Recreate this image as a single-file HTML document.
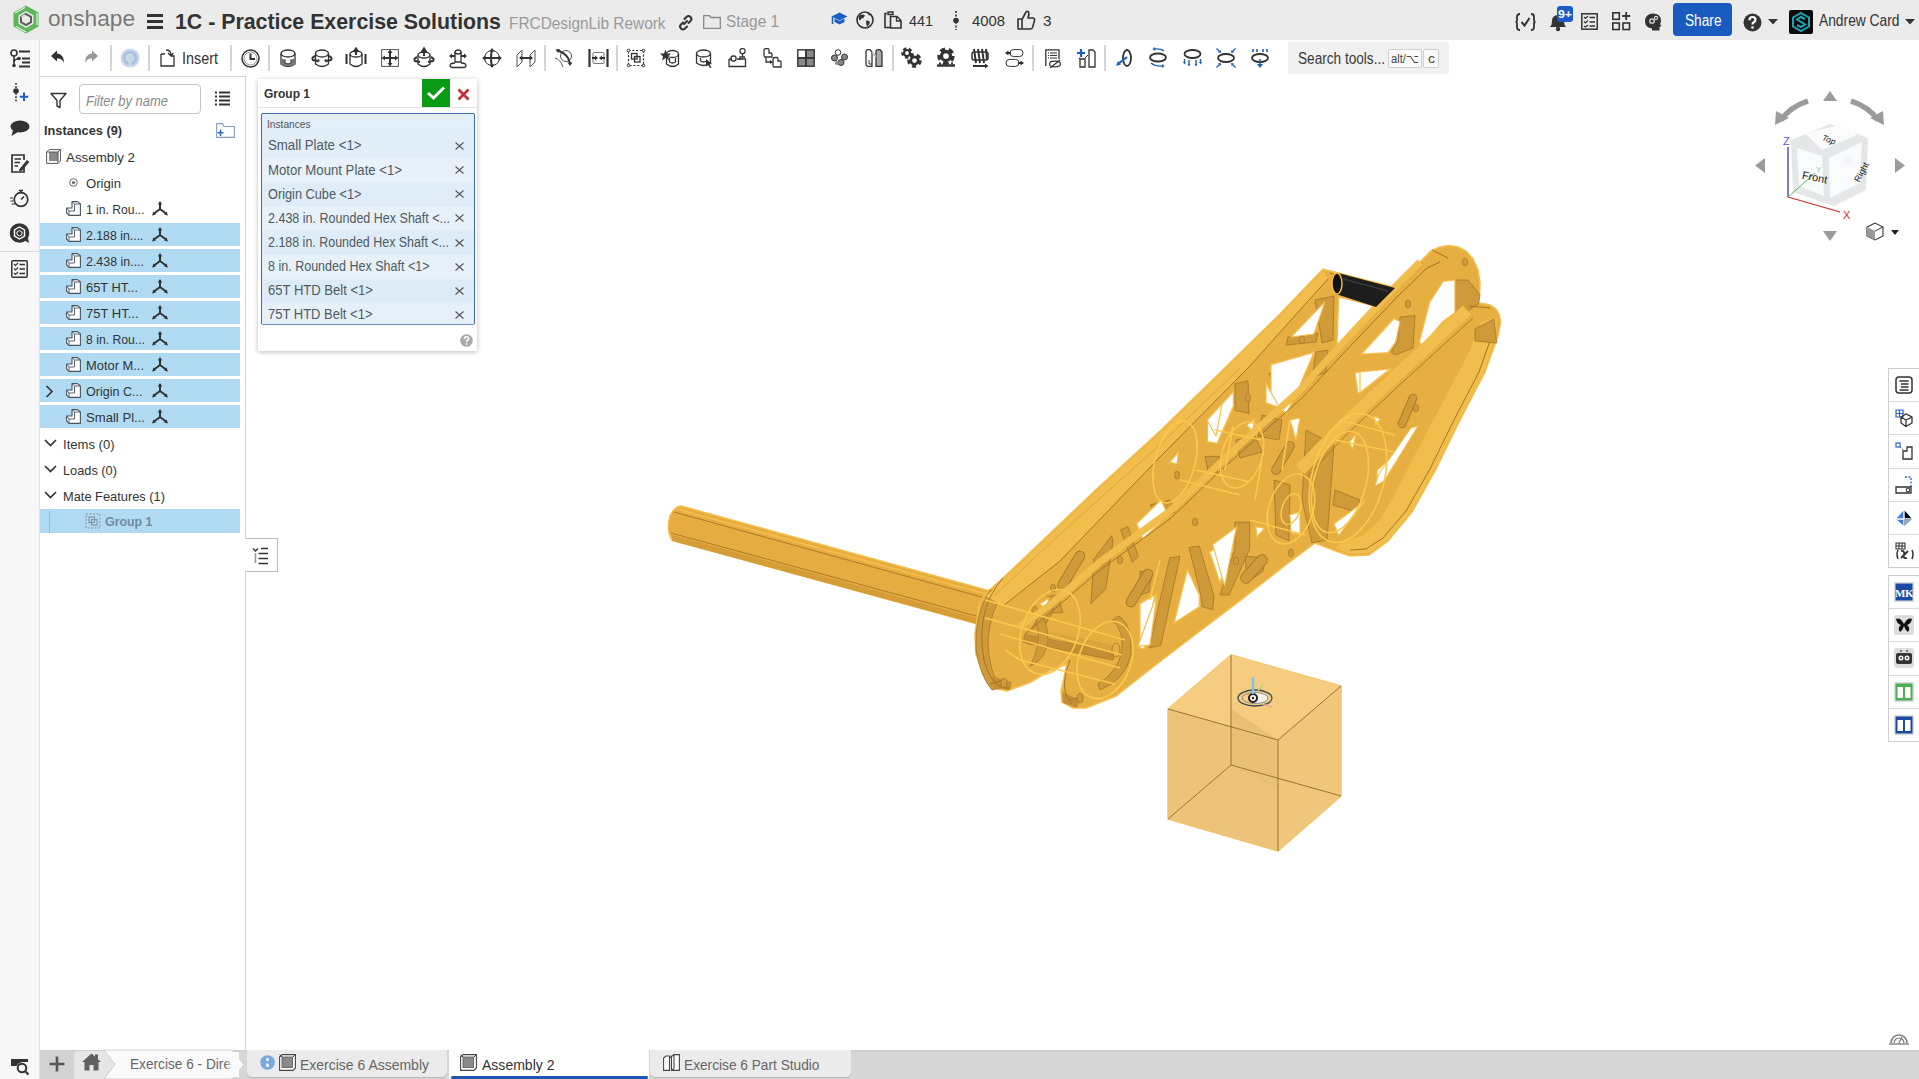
<!DOCTYPE html>
<html><head><meta charset="utf-8">
<style>
*{box-sizing:border-box;margin:0;padding:0}
html,body{width:1919px;height:1079px;overflow:hidden;background:#fff;font-family:"Liberation Sans",sans-serif;color:#333;position:relative}
.a{position:absolute}
.t{position:absolute;white-space:nowrap;line-height:1}
svg{position:absolute;overflow:visible}
</style></head><body>
<div class="a" style="left:0px;top:0px;width:1919px;height:40px;background:#ebebeb"></div>
<div class="a" style="left:0px;top:40px;width:40px;height:1039px;background:#f7f7f7;border-right:1px solid #e2e2e2"></div>
<svg style="left:0;top:0" width="1919" height="1079" viewBox="0 0 1919 1079"><path d="M681,506 L990,591 L978,624 L672,540 Q666,530 670,516 Q674,507 681,506 Z" fill="#e6ac40" stroke="#f6bd48" stroke-width="1.5"/>
<path d="M674,512 L985,598" stroke="#a57526" stroke-width="0.9" fill="none"/><path d="M677,509 L986,594" stroke="#f3bb4a" stroke-width="2" fill="none"/>
<path d="M671,533 L980,617" stroke="#a57526" stroke-width="0.9" fill="none"/>
<path d="M672,535 L980,619 L977,624 L672,541Z" fill="#d49d37"/>
<polygon points="985,594 1003,578 1100,486 1160,431 1233,360 1280,314 1323,269 1338,273 1393,287 1404,280 1420,262 1431,251 1440,247 1449,245.5 1458,247 1466,251 1473,259 1478,270 1480,283 1479.5,295 1477,303 1483,303.5 1490,305 1496,309 1499.5,315 1500.5,323 1498,336 1485,372 1460,420 1436,469 1412,512 1388,541 1369,555 1350,556 1333,550 1315,543 1283,567 1237,603 1200,631 1153,667 1116,696 1086,708 1073,708 1062,702 1061,691 1067,664 1049,671 1031,682 1007,691 994,688 990,679 976,655 975,634 979,605" fill="#e7af41" stroke="#f6be4a" stroke-width="1.5"/>
<polygon points="1315,300 1334,296 1333,340 1322,343 1318,318" fill="#cf9a3a" stroke="#a57526" stroke-width="0.8"/>
<polygon points="1288,337 1318,333 1316,342 1286,345" fill="#cf9a3a" stroke="#a57526" stroke-width="0.8"/>
<polygon points="1316,352 1328,350 1326,372 1312,378" fill="#cf9a3a" stroke="#a57526" stroke-width="0.8"/>
<polygon points="1235,383.7 1248,380.8 1249,413.4 1235,410.4" fill="#cf9a3a" stroke="#a57526" stroke-width="0.8"/>
<polygon points="1269,373.3 1277,373.3 1289,398.6 1280,401.5" fill="#cf9a3a" stroke="#a57526" stroke-width="0.8"/>
<polygon points="1205,456.4 1220,456.4 1217,472.7 1208,471.2" fill="#cf9a3a" stroke="#a57526" stroke-width="0.8"/>
<polygon points="1150,505 1170,500 1175,512 1160,520" fill="#cf9a3a" stroke="#a57526" stroke-width="0.8"/>
<polygon points="1400,317 1415,315.6 1413,348 1395,355 1391,352 1398,340" fill="#cf9a3a" stroke="#a57526" stroke-width="0.8"/>
<polygon points="1455,280 1468,280 1480,294.8 1478.6,303.7 1466,312 1455,315.6" fill="#cf9a3a" stroke="#a57526" stroke-width="0.8"/>
<polygon points="1306,430 1334,445 1327,540 1312,543 1302,500" fill="#cf9a3a" stroke="#a57526" stroke-width="0.8"/>
<polygon points="1274,480 1290,485 1289,541 1276,535" fill="#cf9a3a" stroke="#a57526" stroke-width="0.8"/>
<polygon points="1189,547.4 1199.3,546 1214,596.4 1212.7,609.7 1202.3,606.8 1200.8,594.9" fill="#cf9a3a" stroke="#a57526" stroke-width="0.8"/>
<polygon points="1234.9,522.2 1249.7,522.2 1249.7,549 1229,594.9 1220,594.9 1234.9,549" fill="#cf9a3a" stroke="#a57526" stroke-width="0.8"/>
<polygon points="1245.3,556.3 1266,557.8 1263,571.2 1246.8,583" fill="#cf9a3a" stroke="#a57526" stroke-width="0.8"/>
<polygon points="1149,648 1160.8,645.3 1180,556.3 1169.7,557.8" fill="#cf9a3a" stroke="#a57526" stroke-width="0.8"/>
<polygon points="1140,571 1152,574 1149,592 1140,595" fill="#cf9a3a" stroke="#a57526" stroke-width="0.8"/>
<polygon points="1093.8,559.3 1111.6,535.6 1113,541.5 1105.7,589 1090.8,603.8" fill="#cf9a3a" stroke="#a57526" stroke-width="0.8"/>
<polygon points="1120.5,529.7 1128,526.7 1138.3,556.3 1132.3,562.3" fill="#cf9a3a" stroke="#a57526" stroke-width="0.8"/>
<polygon points="1047.8,596.4 1058.2,595 1062.7,612.7 1052.3,612.7" fill="#cf9a3a" stroke="#a57526" stroke-width="0.8"/>
<polygon points="1236,440 1255,436 1262,452 1240,458" fill="#cf9a3a" stroke="#a57526" stroke-width="0.8"/>
<polygon points="1262,415 1282,420 1279,440 1258,436" fill="#cf9a3a" stroke="#a57526" stroke-width="0.8"/>
<polygon points="1335,490 1360,500 1356,512 1333,505" fill="#cf9a3a" stroke="#a57526" stroke-width="0.8"/>
<path d="M1062.5,585 L1080,556" stroke="#a57526" stroke-width="10.6" stroke-linecap="round"/><path d="M1062.5,585 L1080,556" stroke="#cf9a3a" stroke-width="9.0" stroke-linecap="round"/>
<path d="M1031,640 L1048,610" stroke="#a57526" stroke-width="10.6" stroke-linecap="round"/><path d="M1031,640 L1048,610" stroke="#cf9a3a" stroke-width="9.0" stroke-linecap="round"/>
<path d="M1131,602 L1148,574" stroke="#a57526" stroke-width="10.6" stroke-linecap="round"/><path d="M1131,602 L1148,574" stroke="#cf9a3a" stroke-width="9.0" stroke-linecap="round"/>
<path d="M1276,470 L1290,446" stroke="#a57526" stroke-width="9.6" stroke-linecap="round"/><path d="M1276,470 L1290,446" stroke="#cf9a3a" stroke-width="8" stroke-linecap="round"/>
<path d="M1402,424 L1413,398" stroke="#a57526" stroke-width="8.6" stroke-linecap="round"/><path d="M1402,424 L1413,398" stroke="#cf9a3a" stroke-width="7.0" stroke-linecap="round"/>
<path d="M1246,578 L1262,560" stroke="#a57526" stroke-width="11.6" stroke-linecap="round"/><path d="M1246,578 L1262,560" stroke="#cf9a3a" stroke-width="10" stroke-linecap="round"/>
<path d="M990,590 Q974,615 976,650 Q980,676 992,690 L1000,688 Q988,668 988,640 Q990,612 1003,593Z" fill="#cf9a3a" stroke="#a57526" stroke-width="0.8"/>
<path d="M992,676 L1012,682 L1010,690 L994,688Z" fill="#c48f34"/>
<path d="M1119,616 Q1133,625 1131,655 Q1125,680 1100,690 L1098,684 Q1118,672 1122,650 Q1124,630 1112,620Z" fill="#cf9a3a" stroke="#a57526" stroke-width="0.8"/>
<path d="M1062,692 L1080,700 L1077,708 L1063,703Z" fill="#c48f34"/>
<path d="M1025,634 L1115,652 L1113,660 L1023,642Z" fill="#c48f34" stroke="#a57526" stroke-width="0.7"/>
<path d="M1028,628 L1116,645 L1115,652 L1025,634Z" fill="#dba53e"/>
<ellipse cx="1116" cy="650" rx="4" ry="7" fill="#e7af41" stroke="#a57526" stroke-width="0.8"/>
<path d="M1035,606 Q1048,618 1048,640 Q1046,660 1030,666 Q1040,648 1038,628 Q1036,614 1030,608Z" fill="#cf9a3a" stroke="#a57526" stroke-width="0.7"/>
<polygon points="1291,337 1324.8,301.9 1314,334" fill="#fff" stroke="#f6c050" stroke-width="1.2"/>
<polygon points="1338.6,297 1374,306 1393,288 1337,346" fill="#fff" stroke="#f6c050" stroke-width="1.2"/>
<polygon points="1271,364.6 1314,352.3 1300,385 1286.5,413.5 1271,401" fill="#fff" stroke="#f6c050" stroke-width="1.2"/>
<polygon points="1361.5,354 1394,318.5 1400,321.5 1395.6,342.3 1388,352.7" fill="#fff" stroke="#f6c050" stroke-width="1.2"/>
<polygon points="1355,372.7 1390.5,370 1358,393.5" fill="#fff" stroke="#f6c050" stroke-width="1.2"/>
<polygon points="1419.3,342.3 1429.7,302.2 1443,281.5 1455,280 1455,312.6 1443,321.5 1422.3,345.2" fill="#fff" stroke="#f6c050" stroke-width="1.2"/>
<polygon points="1360,372 1389.7,369 1360,392.7" fill="#fff" stroke="#f6c050" stroke-width="1.2"/>
<polygon points="1207.5,420 1233.4,391.5 1233.4,406 1217,443.4 1207.5,441.6" fill="#fff" stroke="#f6c050" stroke-width="1.2"/>
<polygon points="1266,383.7 1279.4,407.4 1266,403" fill="#fff" stroke="#f6c050" stroke-width="1.2"/>
<polygon points="1246.8,425.2 1254.2,419.3 1252.7,431.2" fill="#fff" stroke="#f6c050" stroke-width="1.2"/>
<polygon points="1169.7,462.3 1178.5,452 1177,463.8" fill="#fff" stroke="#f6c050" stroke-width="1.2"/>
<polygon points="1136.7,523.6 1161,500 1168,515 1142.8,538.9" fill="#fff" stroke="#f6c050" stroke-width="1.2"/>
<polygon points="1174.1,623 1187.4,569.7 1199.3,594.9 1199.3,606.8" fill="#fff" stroke="#f6c050" stroke-width="1.2"/>
<polygon points="1209.7,551.9 1234.9,534.1 1220,583" fill="#fff" stroke="#f6c050" stroke-width="1.2"/>
<polygon points="1140,603.8 1154.8,594.9 1144.4,648.3 1140,648.3" fill="#fff" stroke="#f6c050" stroke-width="1.2"/>
<polygon points="1255.7,526.7 1264.6,528.2 1257.1,537" fill="#fff" stroke="#f6c050" stroke-width="1.2"/>
<polygon points="1289.8,514.8 1300,511.9 1300,534.1 1291.2,532.6" fill="#fff" stroke="#f6c050" stroke-width="1.2"/>
<polygon points="1334,523.8 1362.3,503 1365.2,500 1338.6,535.6" fill="#fff" stroke="#f6c050" stroke-width="1.2"/>
<polygon points="1377,470.4 1389,460 1397.9,460 1377,482.2" fill="#fff" stroke="#f6c050" stroke-width="1.2"/>
<polygon points="1349,442.7 1356,433.8 1353,448.6" fill="#fff" stroke="#f6c050" stroke-width="1.2"/>
<polygon points="1138,646 1157,594 1150,645" fill="#fff" stroke="#f6c050" stroke-width="1.2"/>
<polygon points="1040,604 1049,598 1046,609" fill="#fff" stroke="#f6c050" stroke-width="1.2"/>
<polygon points="1374,416 1380,419 1375.6,425" fill="#fff" stroke="#f6c050" stroke-width="1.2"/>
<polygon points="1212.7,544.6 1236.4,527 1224.6,586" fill="#fff" stroke="#f6c050" stroke-width="1.2"/>
<polygon points="1207,420 1222,404 1216,436" fill="#fff" stroke="#f6c050" stroke-width="1.2"/>
<polygon points="1290,420 1300,418 1296,440" fill="#fff" stroke="#f6c050" stroke-width="1.2"/>
<polygon points="986,596 1003,580 1100,488 1160,433 1233,362 1280,316 1323,271 1328,279 1282,330 1250,366 1159,458 1060,561 1003,606" fill="#f1bd4c"/>
<path d="M994,596 L1060,534 L1161,444 L1240,368" fill="none" stroke="#dca23c" stroke-width="1"/>
<path d="M1003,606 L1060,561 L1159,458 L1250,366 L1282,330 L1328,279" fill="none" stroke="#a57526" stroke-width="1"/>
<path d="M1330,273 L1338,276" stroke="#a57526" stroke-width="1"/>
<path d="M1019,627 L1050,605 L1100,562 L1170,511 L1220,463 L1300,390 L1337,349 L1393,289 L1420,262" fill="none" stroke="#f1bd4c" stroke-width="7"/>
<path d="M1025,634 L1050,613 L1100,570 L1170,519 L1220,471 L1302,398 L1340,357 L1397,297 L1427,268 L1440,262" fill="none" stroke="#a57526" stroke-width="1"/>
<path d="M1432,250 L1448,258" stroke="#a57526" stroke-width="1"/>
<polygon points="1497,318 1496,336 1484,372 1459,420 1435,469 1411,512 1387,541 1369,553 1350,554 1335,548 1345,540 1362,536 1380,520 1396,492 1418,449 1446,396 1470,350 1481,322" fill="#f1bd4c"/>
<path d="M1493,322 L1491,338 L1479,372 L1454,420 L1430,469 L1406,511 L1383,538 L1366,549 L1350,550" fill="none" stroke="#a57526" stroke-width="1"/>
<polygon points="1411,428 1418,426 1384,481 1375,486 1379,474" fill="#fff" stroke="#f6c050" stroke-width="1"/>
<polygon points="1475,329 1494,319 1496.6,343 1475,341" fill="#cf9a3a" stroke="#a57526" stroke-width="0.8"/>
<path d="M1467,310 L1400,372 L1340,428 L1300,470" fill="none" stroke="#f1bd4c" stroke-width="12"/>
<path d="M1473,318 L1405,380 L1345,436 L1306,478" fill="none" stroke="#a57526" stroke-width="0.9"/>
<path d="M1469,306 L1490,308" stroke="#a57526" stroke-width="1"/>
<path d="M1003,578 Q975,610 984,660 Q992,690 1010,688" fill="none" stroke="#a57526" stroke-width="1"/>
<path d="M1070,660 Q1058,690 1072,704" fill="none" stroke="#a57526" stroke-width="1"/>
<path d="M990,684 L1003,680 M1070,700 L1083,696" stroke="#a57526" stroke-width="1"/>
<ellipse cx="1004" cy="683" rx="3" ry="4.5" fill="#cf9a3a" stroke="#a57526" stroke-width="0.8"/>
<ellipse cx="1080" cy="698" rx="3" ry="4.5" fill="#cf9a3a" stroke="#a57526" stroke-width="0.8"/>
<ellipse cx="1177" cy="475" rx="2.6" ry="4" fill="#cf9a3a" stroke="#a57526" stroke-width="0.7"/>
<ellipse cx="1248" cy="398" rx="2.6" ry="4" fill="#cf9a3a" stroke="#a57526" stroke-width="0.7"/>
<ellipse cx="1302" cy="340" rx="2.6" ry="4" fill="#cf9a3a" stroke="#a57526" stroke-width="0.7"/>
<ellipse cx="1408" cy="304" rx="2.6" ry="4" fill="#cf9a3a" stroke="#a57526" stroke-width="0.7"/>
<ellipse cx="1465" cy="262" rx="2.6" ry="4" fill="#cf9a3a" stroke="#a57526" stroke-width="0.7"/>
<ellipse cx="1053" cy="588" rx="2.6" ry="4" fill="#cf9a3a" stroke="#a57526" stroke-width="0.7"/>
<ellipse cx="1120" cy="560" rx="2.6" ry="4" fill="#cf9a3a" stroke="#a57526" stroke-width="0.7"/>
<ellipse cx="1236" cy="561" rx="2.6" ry="4" fill="#cf9a3a" stroke="#a57526" stroke-width="0.7"/>
<ellipse cx="1291" cy="553" rx="2.6" ry="4" fill="#cf9a3a" stroke="#a57526" stroke-width="0.7"/>
<ellipse cx="1195" cy="522" rx="2.6" ry="4" fill="#cf9a3a" stroke="#a57526" stroke-width="0.7"/>
<ellipse cx="1416" cy="408" rx="2.6" ry="4" fill="#cf9a3a" stroke="#a57526" stroke-width="0.7"/>
<g fill="none" stroke="#fbc94e" stroke-width="1.6" opacity="1"><ellipse cx="1050" cy="632" rx="28" ry="44" transform="rotate(20 1050 632)"/><ellipse cx="1105" cy="660" rx="26" ry="40" transform="rotate(20 1105 660)"/><ellipse cx="1175" cy="462" rx="20" ry="42" transform="rotate(15 1175 462)"/><ellipse cx="1242" cy="455" rx="20" ry="34" transform="rotate(18 1242 455)"/><ellipse cx="1348" cy="478" rx="36" ry="66" transform="rotate(15 1348 478)"/><ellipse cx="1340" cy="482" rx="26" ry="52" transform="rotate(15 1340 482)"/><ellipse cx="1291" cy="509" rx="22" ry="36" transform="rotate(18 1291 509)"/><ellipse cx="1291" cy="509" rx="9" ry="16" transform="rotate(18 1291 509)"/><path d="M985,600 L1125,640 M985,618 L1122,655 M1000,634 L1120,668 M1005,650 L1020,660 L1115,684"/><path d="M1180,480 L1240,495 M1196,470 L1250,482 M1215,430 L1262,440 M1340,420 L1395,435 M1335,440 L1395,452 M1250,520 L1305,535"/><path d="M1233,426 L1225,470 M1262,460 L1255,500 M1290,420 L1282,470 M1160,560 L1150,600"/></g>
<path d="M1338,273 L1395,288 L1376,307 L1336,294 Z" fill="#1d1d1d"/>
<ellipse cx="1337" cy="283.5" rx="5" ry="10.5" fill="#111" stroke="#f6be4a" stroke-width="1.4"/>
<path d="M1343,279 L1388,291" stroke="#3a3a3a" stroke-width="1.5"/>
<polygon points="1231,655 1341,686 1341,796 1278,851 1168,819 1168,709" fill="#f0c57a" stroke="#f7c25a" stroke-width="1.5"/>
<polygon points="1168,709 1278,740 1341,686 1231,655" fill="#f6cd80"/>
<polygon points="1168,709 1278,740 1278,851 1168,819" fill="#edc379"/>
<polygon points="1278,740 1341,686 1341,796 1278,851" fill="#f0c67b"/>
<polygon points="1231,709 1278,740 1278,790 1231,765" fill="#e9bf74"/>
<g stroke="#9c7433" stroke-width="1" fill="none"><path d="M1231,655 V765 L1168,819 M1231,765 L1341,796 M1168,709 L1278,740 L1341,686 M1278,740 V851"/></g>
<ellipse cx="1255" cy="698" rx="17" ry="8" fill="none" stroke="#3c4a55" stroke-width="1.3"/>
<path d="M1255,692.5 A13,5.5 0 0 1 1255,703.5Z" fill="#f4f1ea"/><ellipse cx="1255" cy="698" rx="13" ry="5.5" fill="none" stroke="#7a8a95" stroke-width="0.9"/>
<circle cx="1253" cy="698" r="4" fill="#fff" stroke="#222" stroke-width="2"/><circle cx="1253" cy="698" r="1.2" fill="#222"/>
<path d="M1253,694 V677" stroke="#7cc4f0" stroke-width="2.5"/><path d="M1257,692 L1263,685" stroke="#9ad48a" stroke-width="1.2"/><path d="M1262,704 L1272,707" stroke="#e7a0b0" stroke-width="1.2"/></svg>
<svg style="left:12px;top:5px" width="28" height="29" viewBox="0 0 28 29">
<path d="M14,0.5 L26.5,7.5 L26.5,21.5 L14,28.5 L1.5,21.5 L1.5,7.5 Z" fill="#5cb85a"/>
<path d="M14,6 L21.5,10.2 L21.5,18.8 L14,23 L6.5,18.8 L6.5,10.2 Z" fill="#e9e9e9"/>
<path d="M3,8 L13,2.5 M25,8 L25,20 M14,27 L4,21.5" stroke="#ebebeb" stroke-width="1.2"/>
<path d="M14,9 L19,11.8 L19,17.2 L14,20 L9,17.2 L9,11.8 Z" fill="none" stroke="#5d5d5d" stroke-width="2"/>
<path d="M9.5,12 L13,10" stroke="#e9e9e9" stroke-width="1.5"/>
</svg>
<div class="t" style="left:47.5px;top:7.7px;font-size:22px;color:#787878;font-weight:normal;font-style:normal;transform:scaleX(1.0305);transform-origin:0 0;">onshape</div>
<div class="a" style="left:147px;top:14px;width:16px;height:3px;background:#333"></div>
<div class="a" style="left:147px;top:20px;width:16px;height:3px;background:#333"></div>
<div class="a" style="left:147px;top:26px;width:16px;height:3px;background:#333"></div>
<div class="t" style="left:175.0px;top:10.8px;font-size:22.5px;color:#333;font-weight:bold;font-style:normal;transform:scaleX(0.9479);transform-origin:0 0;">1C - Practice Exercise Solutions</div>
<div class="t" style="left:508.5px;top:15.7px;font-size:16px;color:#9a9a9a;font-weight:normal;font-style:normal;transform:scaleX(0.9618);transform-origin:0 0;">FRCDesignLib Rework</div>
<svg style="left:678px;top:15px" width="15" height="15" viewBox="0 0 15 15"><g fill="none" stroke="#333" stroke-width="2" stroke-linecap="round"><path d="M6,9 L9,6"/><path d="M5,7.5 L3,9.5 a2.8,2.8 0 0 0 4,4 L9,11.5"/><path d="M6.5,4 L8.5,2 a2.8,2.8 0 0 1 4,4 L10.5,8"/></g></svg>
<svg style="left:703px;top:15px" width="18" height="14" viewBox="0 0 18 14"><path d="M0.7,0.7 H6.5 L8,2.5 H17.3 V13.3 H0.7 Z" fill="none" stroke="#888" stroke-width="1.3"/></svg>
<div class="t" style="left:725.5px;top:14.2px;font-size:16px;color:#999;font-weight:normal;font-style:normal;transform:scaleX(0.9609);transform-origin:0 0;">Stage 1</div>
<svg style="left:831px;top:12px" width="17" height="15" viewBox="0 0 17 15"><path d="M8.5,0.5 L16.5,4.5 L8.5,8.5 L0.5,4.5Z" fill="#1b5ec4"/><path d="M3.5,6.5 V10 L8.5,12.5 L13.5,10 V6.5 L8.5,9Z" fill="#1b5ec4"/><path d="M1.5,5 V12" stroke="#1b5ec4" stroke-width="1.5"/></svg>
<svg style="left:856px;top:11px" width="19" height="18" viewBox="0 0 19 18"><circle cx="9" cy="9" r="8" fill="none" stroke="#333" stroke-width="1.6"/><path d="M4,4 Q7,3 9,4.5 Q8,7 5.5,7.5 Q4.5,10 3,9 Q2,6 4,4Z M10,9.5 Q13,9 14,11 Q13.5,14 11,15.5 Q10,13 10,9.5Z M11,2 Q13,2 15,4.5 Q12.5,5 11,2Z" fill="#333"/></svg>
<svg style="left:884px;top:11px" width="19" height="18" viewBox="0 0 19 18"><path d="M3,2.5 H1 V16.5 H6" fill="none" stroke="#333" stroke-width="1.6"/><path d="M4,1 H9 V3.5 H4Z" fill="none" stroke="#333" stroke-width="1.4"/><path d="M6.5,5.5 H13 L17,9.5 V17 H6.5Z" fill="none" stroke="#333" stroke-width="1.6"/><path d="M12.5,5.5 V10 H17" fill="none" stroke="#333" stroke-width="1.4"/></svg>
<div class="t" style="left:908.5px;top:13.4px;font-size:15.5px;color:#333;font-weight:normal;font-style:normal;transform:scaleX(0.9275);transform-origin:0 0;">441</div>
<svg style="left:953px;top:11px" width="6" height="19" viewBox="0 0 6 19"><path d="M3,0 V19" stroke="#333" stroke-width="1.6" stroke-dasharray="2,1.6"/><circle cx="3" cy="9.5" r="2.8" fill="#333"/></svg>
<div class="t" style="left:971.5px;top:13.4px;font-size:15.5px;color:#333;font-weight:normal;font-style:normal;transform:scaleX(0.9570);transform-origin:0 0;">4008</div>
<svg style="left:1017px;top:10px" width="19" height="20" viewBox="0 0 19 20"><path d="M1,9 H5 V19 H1Z M5,9.5 L9,2 Q10.5,0.5 11.5,2 Q12.5,4 11,8 H16 Q18,8.5 17.5,10.5 L15.5,17.5 Q15,19 13,19 H5" fill="none" stroke="#333" stroke-width="1.6" stroke-linejoin="round"/></svg>
<div class="t" style="left:1043.0px;top:13.4px;font-size:15.5px;color:#333;font-weight:normal;font-style:normal;transform:scaleX(0.9855);transform-origin:0 0;">3</div>
<svg style="left:1515px;top:13px" width="21" height="18" viewBox="0 0 21 18"><path d="M5,1 Q2,1 2,3.5 V7 Q2,9 0.5,9 Q2,9 2,11 V14.5 Q2,17 5,17 M16,1 Q19,1 19,3.5 V7 Q19,9 20.5,9 Q19,9 19,11 V14.5 Q19,17 16,17" fill="none" stroke="#333" stroke-width="1.8"/><path d="M6.5,9 L9.5,12.5 L14.5,5" fill="none" stroke="#333" stroke-width="2"/></svg>
<svg style="left:1548px;top:10px" width="20" height="22" viewBox="0 0 20 22"><path d="M2,17 Q4,15 4,11 Q4,5.5 10,5 Q16,5.5 16,11 Q16,15 18,17Z" fill="#333"/><circle cx="10" cy="19" r="2.2" fill="#333"/></svg>
<div class="a" style="left:1557px;top:6px;width:16px;height:15.5px;background:#1a5dc4;border-radius:3px"></div>
<div class="t" style="left:1558.0px;top:8.9px;font-size:11px;color:#fff;font-weight:bold;font-style:normal;transform:scaleX(1.1158);transform-origin:0 0;">9+</div>
<svg style="left:1581px;top:13px" width="17" height="17" viewBox="0 0 17 17"><rect x="0.8" y="0.8" width="15.4" height="15.4" fill="none" stroke="#333" stroke-width="1.5"/><path d="M3,4 L4.5,5.5 L7,3 M3,8.5 L4.5,10 L7,7.5 M3,13 L4.5,14 L7,12" fill="none" stroke="#333" stroke-width="1.1"/><path d="M8.5,4.5 H14 M8.5,9 H14 M8.5,13 H14" stroke="#333" stroke-width="1.3"/></svg>
<svg style="left:1612px;top:12px" width="19" height="19" viewBox="0 0 19 19"><rect x="0.8" y="0.8" width="6.5" height="6.5" fill="none" stroke="#333" stroke-width="1.6"/><rect x="0.8" y="11" width="6.5" height="6.5" fill="none" stroke="#333" stroke-width="1.6"/><rect x="11" y="11" width="6.5" height="6.5" fill="none" stroke="#333" stroke-width="1.6"/><path d="M14.2,0 V8 M10.2,4 H18.2" stroke="#333" stroke-width="1.8"/></svg>
<svg style="left:1644px;top:13px" width="18" height="18" viewBox="0 0 18 18"><path d="M9,0.5 Q17,0.5 17,8 Q17,10 16,11 L17.5,13 L15.5,14 V17.5 H8 V15.5 Q1,15 1,8 Q1.5,0.5 9,0.5Z" fill="#333"/><circle cx="8" cy="8" r="2.2" fill="none" stroke="#ddd" stroke-width="1.3"/><circle cx="12" cy="5" r="1.6" fill="none" stroke="#ddd" stroke-width="1.1"/></svg>
<div class="a" style="left:1673px;top:3px;width:59px;height:33px;background:#1a5bbf;border-radius:4px"></div>
<div class="t" style="left:1684.5px;top:12.7px;font-size:16px;color:#fff;font-weight:normal;font-style:normal;transform:scaleX(0.8547);transform-origin:0 0;">Share</div>
<svg style="left:1743px;top:13px" width="19" height="19" viewBox="0 0 19 19"><circle cx="9.5" cy="9.5" r="9" fill="#333"/><path d="M6.5,7.2 Q6.5,4 9.5,4 Q12.5,4 12.5,6.8 Q12.5,8.5 10.5,9.5 Q9.5,10.2 9.5,11.5" fill="none" stroke="#fff" stroke-width="2.2"/><circle cx="9.5" cy="14.5" r="1.3" fill="#fff"/></svg>
<svg style="left:1768px;top:19px" width="11" height="6" viewBox="0 0 11 6"><path d="M0,0 H10 L5,5.5Z" fill="#333"/></svg>
<div class="a" style="left:1789px;top:10px;width:24px;height:24px;background:#0b0b0b;border-radius:2px"></div>
<svg style="left:1791px;top:12px" width="20" height="20" viewBox="0 0 20 20"><path d="M10,1 L18,5.5 V14.5 L10,19 L2,14.5 V5.5Z" fill="none" stroke="#1ba6b4" stroke-width="2"/><path d="M14,7 L10,5 L6,7.5 L10,10 L14,12.5 L10,15 L6,13" fill="none" stroke="#1ba6b4" stroke-width="2"/></svg>
<div class="t" style="left:1818.5px;top:13.2px;font-size:16px;color:#333;font-weight:normal;font-style:normal;transform:scaleX(0.8621);transform-origin:0 0;">Andrew Card</div>
<svg style="left:1905px;top:19px" width="11" height="6" viewBox="0 0 11 6"><path d="M0,0 H10 L5,5.5Z" fill="#333"/></svg>
<svg style="left:50px;top:50px" width="14" height="15" viewBox="0 0 14 15"><path d="M1,6 L7,0.5 V3.5 Q14,4 14,13 Q12,8 7,8.5 V11.5Z" fill="#333"/></svg>
<svg style="left:85px;top:50px" width="14" height="15" viewBox="0 0 14 15"><path d="M13,6 L7,0.5 V3.5 Q0,4 0,13 Q2,8 7,8.5 V11.5Z" fill="#999"/></svg>
<div class="a" style="left:110px;top:45px;width:2px;height:26px;background:#d5d5d5"></div>
<svg style="left:120px;top:48px" width="20" height="20" viewBox="0 0 20 20"><circle cx="10" cy="10" r="9.5" fill="#c7d6eb"/><circle cx="10" cy="10" r="6" fill="none" stroke="#a9c0e0" stroke-width="2.5"/><path d="M10,10 V19" stroke="#c7d6eb" stroke-width="3"/></svg>
<div class="a" style="left:148px;top:45px;width:2px;height:26px;background:#d5d5d5"></div>
<svg style="left:160px;top:49px" width="16" height="18" viewBox="0 0 16 18"><path d="M1,5 H5 M1,5 V17 H14 V7 H11" fill="none" stroke="#333" stroke-width="1.3"/><path d="M6,1 Q11,1 11,6 M8,4 L11,7 L13.5,4" fill="none" stroke="#333" stroke-width="1.3"/></svg>
<div class="t" style="left:182.0px;top:51.2px;font-size:16px;color:#333;font-weight:normal;font-style:normal;transform:scaleX(0.8996);transform-origin:0 0;">Insert</div>
<div class="a" style="left:230px;top:45px;width:2px;height:26px;background:#d5d5d5"></div>
<svg style="left:241px;top:49px" width="19" height="19" viewBox="0 0 19 19"><circle cx="9.5" cy="9.5" r="8.5" fill="none" stroke="#333" stroke-width="1.5"/><circle cx="9.5" cy="9.5" r="6.5" fill="none" stroke="#999" stroke-width="1"/><path d="M9.5,4.5 V10 H14" fill="none" stroke="#333" stroke-width="2"/></svg>
<div class="a" style="left:268px;top:45px;width:2px;height:26px;background:#d5d5d5"></div>
<svg style="left:280px;top:49px" width="16" height="19" viewBox="0 0 16 19"><ellipse cx="8" cy="4.5" rx="7" ry="3.5" fill="none" stroke="#333" stroke-width="1.3"/><path d="M1,4.5 V15 Q8,20 15,15 V4.5" fill="none" stroke="#333" stroke-width="1.3"/><path d="M1,9 Q8,13 15,9 V15 Q8,20 1,15Z M5,11 V14 Q8,16 11,14 V11" fill="#777"/><path d="M5,10.5 V14 Q8,16 11,14 V10.5" fill="#fff" stroke="#333" stroke-width="1"/></svg>
<svg style="left:311px;top:49px" width="22" height="19" viewBox="0 0 22 19"><ellipse cx="11" cy="4.5" rx="6.5" ry="3.5" fill="none" stroke="#333" stroke-width="1.3"/><path d="M4.5,4.5 V15 Q11,20 17.5,15 V4.5" fill="none" stroke="#333" stroke-width="1.3"/><path d="M4,7 Q0,9 2,11 L7,12 M18,7 Q22,9 20,11 L15,12" fill="none" stroke="#333" stroke-width="2"/><path d="M7,9.5 L9,12 L6,13.5Z M15,9.5 L13,12 L16,13.5Z" fill="#333"/></svg>
<svg style="left:345px;top:48px" width="22" height="20" viewBox="0 0 22 20"><ellipse cx="11" cy="6" rx="6" ry="3" fill="none" stroke="#333" stroke-width="1.3"/><path d="M5,6 V16 Q11,21 17,16 V6" fill="none" stroke="#333" stroke-width="1.3"/><path d="M11,7 V1.5 M8.5,4 L11,0.5 L13.5,4" fill="none" stroke="#333" stroke-width="2"/><path d="M1.5,6 V16 M20.5,6 V16" stroke="#333" stroke-width="2"/></svg>
<svg style="left:381px;top:49px" width="18" height="18" viewBox="0 0 18 18"><rect x="0.6" y="0.6" width="16.8" height="16.8" fill="none" stroke="#555" stroke-width="1"/><path d="M9,2 V16 M2,9 H16" fill="none" stroke="#333" stroke-width="2"/><path d="M9,0.5 L6.5,4 H11.5Z M9,17.5 L6.5,14 H11.5Z M0.5,9 L4,6.5 V11.5Z M17.5,9 L14,6.5 V11.5Z" fill="#333"/></svg>
<svg style="left:413px;top:48px" width="22" height="20" viewBox="0 0 22 20"><ellipse cx="11" cy="7" rx="6" ry="3" fill="none" stroke="#333" stroke-width="1.3"/><path d="M5,7 V16 Q11,21 17,16 V7" fill="none" stroke="#333" stroke-width="1.3"/><path d="M11,8 V2 M8.5,4.5 L11,0.5 L13.5,4.5" fill="none" stroke="#333" stroke-width="2"/><path d="M4,9 Q0,11 2,13 L7,14 M18,9 Q22,11 20,13 L15,14" fill="none" stroke="#333" stroke-width="2"/></svg>
<svg style="left:449px;top:49px" width="18" height="19" viewBox="0 0 18 19"><path d="M6,3 V13 H12 V3" fill="none" stroke="#333" stroke-width="1.3"/><ellipse cx="9" cy="3" rx="3" ry="2" fill="none" stroke="#333" stroke-width="1.3"/><path d="M6,14 Q1,14 1,16.5 Q1,18.5 4,18.5 H14 Q17,18.5 17,16.5 Q17,14 12,14" fill="none" stroke="#333" stroke-width="1.3"/><path d="M1,7 H6 M12,7 H17" fill="none" stroke="#333" stroke-width="2"/><path d="M0,7 L3,4.5 V9.5Z M18,7 L15,4.5 V9.5Z" fill="#333"/></svg>
<svg style="left:482px;top:48px" width="20" height="20" viewBox="0 0 20 20"><circle cx="10" cy="10" r="7.5" fill="none" stroke="#333" stroke-width="1"/><path d="M10,2 Q8,10 10,18 M2,10 H18" fill="none" stroke="#333" stroke-width="2"/><path d="M10,0 L7.5,3.5 H12.5Z M10,20 L7.5,16.5 H12.5Z M0,10 L3.5,7.5 V12.5Z M20,10 L16.5,7.5 V12.5Z" fill="#333"/></svg>
<svg style="left:516px;top:49px" width="20" height="19" viewBox="0 0 20 19"><path d="M1,18 V6 L6,1 V13Z M14,18 V6 L19,1 V13Z" fill="none" stroke="#555" stroke-width="1"/><path d="M4,9 H16" fill="none" stroke="#333" stroke-width="2"/><path d="M3,9 L6,6.5 V11.5Z M17,9 L14,6.5 V11.5Z" fill="#333"/></svg>
<div class="a" style="left:544px;top:45px;width:2px;height:26px;background:#d5d5d5"></div>
<svg style="left:555px;top:49px" width="18" height="19" viewBox="0 0 18 19"><path d="M0,9 Q5,10 8,18" fill="none" stroke="#555" stroke-width="1"/><circle cx="11" cy="7" r="5.5" fill="none" stroke="#555" stroke-width="1"/><path d="M2,1.5 Q9,3 13,9 L15,14" fill="none" stroke="#333" stroke-width="2"/><path d="M0.5,0.5 L5,0 L3,4Z M15,17 L12.5,13.5 H17.5Z" fill="#333"/></svg>
<svg style="left:588px;top:49px" width="21" height="18" viewBox="0 0 21 18"><path d="M1.5,0 V18 M19.5,0 V18" stroke="#333" stroke-width="2.2"/><rect x="5" y="3.5" width="11" height="11" rx="1" fill="none" stroke="#777" stroke-width="1"/><path d="M4,9 H9 M12,9 H17" fill="none" stroke="#333" stroke-width="2"/><path d="M10,9 L7,6.5 V11.5Z M11,9 L14,6.5 V11.5Z" fill="#333"/></svg>
<div class="a" style="left:616px;top:45px;width:2px;height:26px;background:#d5d5d5"></div>
<svg style="left:627px;top:49px" width="18" height="18" viewBox="0 0 18 18"><rect x="1.5" y="1.5" width="15" height="15" fill="none" stroke="#333" stroke-width="1.2" stroke-dasharray="2.2,1.6"/><circle cx="1.5" cy="1.5" r="1.3" fill="#fff" stroke="#333" stroke-width="1"/><circle cx="16.5" cy="1.5" r="1.3" fill="#fff" stroke="#333" stroke-width="1"/><circle cx="1.5" cy="16.5" r="1.3" fill="#fff" stroke="#333" stroke-width="1"/><circle cx="16.5" cy="16.5" r="1.3" fill="#fff" stroke="#333" stroke-width="1"/><rect x="4.5" y="4.5" width="5.5" height="5.5" fill="none" stroke="#333" stroke-width="1.3"/><rect x="7.5" y="7.5" width="5.5" height="5.5" fill="none" stroke="#333" stroke-width="1.3"/></svg>
<svg style="left:660px;top:49px" width="20" height="19" viewBox="0 0 20 19"><ellipse cx="12.5" cy="5" rx="6" ry="3.5" fill="none" stroke="#333" stroke-width="1.3"/><path d="M6.5,5 V15 Q12.5,20 18.5,15 V5" fill="none" stroke="#333" stroke-width="1.3"/><path d="M9.5,9 V13 Q12.5,15 15.5,13 V9" fill="none" stroke="#333" stroke-width="1.3"/><path d="M5.5,0.5 L7,4.5 L11,4.5 L8,7.5 L9,11.5 L5.5,9 L2,11.5 L3,7.5 L0,4.5 L4,4.5Z" fill="#333"/></svg>
<svg style="left:696px;top:49px" width="17" height="19" viewBox="0 0 17 19"><ellipse cx="7.5" cy="4.5" rx="7" ry="3.5" fill="none" stroke="#333" stroke-width="1.3"/><path d="M0.5,4.5 V14 Q7.5,19 14.5,14 V4.5" fill="none" stroke="#333" stroke-width="1.3"/><path d="M4.5,9 V12 Q7.5,14 10.5,12" fill="none" stroke="#333" stroke-width="1.3"/><path d="M10,10 L16,15 L13.5,15.5 L15.5,18.5 L14,19 L12,16 L10,17.5Z" fill="#333"/></svg>
<svg style="left:728px;top:48px" width="19" height="20" viewBox="0 0 19 20"><rect x="12" y="0.6" width="5" height="5" rx="2" fill="none" stroke="#333" stroke-width="1.3"/><path d="M14.5,6 V9" fill="none" stroke="#333" stroke-width="1.3"/><path d="M1,11 V18.5 H17.5 V11 H11 M1,11 H4" fill="none" stroke="#333" stroke-width="1.3"/><rect x="3" y="8" width="5" height="5" rx="2" fill="none" stroke="#333" stroke-width="1.3"/><path d="M9,11 H12 V9 H17" fill="none" stroke="#333" stroke-width="1.3"/></svg>
<svg style="left:762px;top:48px" width="20" height="20" viewBox="0 0 20 20"><path d="M2,7 V2 Q2,0.6 4,0.6 H6 Q7,0.6 7,2 V5 H9 Q10,5 10,6.5 V9 H3 Q2,9 2,7Z" fill="none" stroke="#333" stroke-width="1.3"/><path d="M11,14 V11 Q11,9.5 13,9.5 H15 Q16,9.5 16,11 V13 H18 Q19,13 19,14.5 V19 H12 Q11,19 11,17Z" fill="none" stroke="#333" stroke-width="1.3"/><path d="M4,9.5 V14 H10" fill="none" stroke="#333" stroke-width="1.3"/><path d="M11,14 L8,12 V16Z" fill="#333"/></svg>
<svg style="left:797px;top:49px" width="18" height="18" viewBox="0 0 18 18"><rect x="0.8" y="0.8" width="8" height="8" fill="#fff" stroke="#333" stroke-width="1.4"/><rect x="9.2" y="0.8" width="8" height="8" fill="#8a8a8a" stroke="#333" stroke-width="1.4"/><rect x="0.8" y="9.2" width="8" height="8" fill="#8a8a8a" stroke="#333" stroke-width="1.4"/><rect x="9.2" y="9.2" width="8" height="8" fill="#8a8a8a" stroke="#333" stroke-width="1.4"/></svg>
<svg style="left:831px;top:49px" width="18" height="18" viewBox="0 0 18 18"><circle cx="7" cy="3.5" r="2.8" fill="#fff" stroke="#333" stroke-width="1"/><circle cx="3.5" cy="9" r="3" fill="#888" stroke="#333" stroke-width="1"/><circle cx="13.5" cy="8" r="3" fill="#888" stroke="#333" stroke-width="1"/><circle cx="10" cy="13.5" r="3" fill="#888" stroke="#333" stroke-width="1"/><circle cx="6" cy="14" r="2" fill="#888"/></svg>
<svg style="left:865px;top:49px" width="18" height="18" viewBox="0 0 18 18"><path d="M1,2 Q1,0.6 3,0.6 H5 L7,3 V17.4 H2.5 L1,16Z" fill="#fff" stroke="#333" stroke-width="1.3"/><path d="M4,11 V15 H7" fill="none" stroke="#333" stroke-width="1"/><path d="M11,2 Q11,0.6 13,0.6 H15 L17,3 V17.4 H11Z" fill="#aaa" stroke="#333" stroke-width="1.3"/><path d="M7,3 L11,8" stroke="#bbb" stroke-width="2"/></svg>
<div class="a" style="left:892px;top:45px;width:2px;height:26px;background:#d5d5d5"></div>
<svg style="left:902px;top:48px" width="19" height="19" viewBox="0 0 19 19"><circle cx="5" cy="5" r="4" fill="none" stroke="#333" stroke-width="3.6" stroke-dasharray="2.8,2.2"/><circle cx="5" cy="5" r="3.0" fill="none" stroke="#333" stroke-width="2.2"/><circle cx="12.5" cy="12.5" r="5" fill="none" stroke="#333" stroke-width="4.5" stroke-dasharray="3.5,2.75"/><circle cx="12.5" cy="12.5" r="3.75" fill="none" stroke="#333" stroke-width="2.75"/></svg>
<svg style="left:937px;top:48px" width="18" height="19" viewBox="0 0 18 19"><circle cx="9" cy="8" r="6" fill="none" stroke="#333" stroke-width="5.4" stroke-dasharray="4.199999999999999,3.3000000000000003"/><circle cx="9" cy="8" r="4.5" fill="none" stroke="#333" stroke-width="3.3000000000000003"/><path d="M0,17.5 H18" stroke="#333" stroke-width="2.5"/><path d="M2,15.5 H4 M6,15.5 H8 M10,15.5 H12 M14,15.5 H16" stroke="#333" stroke-width="2"/></svg>
<svg style="left:971px;top:48px" width="18" height="20" viewBox="0 0 18 20"><rect x="1" y="4" width="16" height="8" rx="2" fill="none" stroke="#333" stroke-width="1.5"/><path d="M3,1 L5,15 M7,1 L9,15 M11,1 L13,15 M15,1 L16,12" stroke="#333" stroke-width="2"/><path d="M2,18 H16" fill="none" stroke="#333" stroke-width="2"/><path d="M17.5,18 L14,15.5 V20.5Z" fill="#333"/></svg>
<svg style="left:1005px;top:49px" width="19" height="18" viewBox="0 0 19 18"><rect x="5" y="0.6" width="13" height="7" rx="3.5" fill="none" stroke="#333" stroke-width="1"/><path d="M6,4 H1" fill="none" stroke="#333" stroke-width="2"/><path d="M0,4 L3.5,1.5 V6.5Z" fill="#333"/><rect x="1" y="10.4" width="13" height="7" rx="3.5" fill="none" stroke="#333" stroke-width="1"/><path d="M13,14 H18" fill="none" stroke="#333" stroke-width="2"/><path d="M19,14 L15.5,11.5 V16.5Z" fill="#333"/></svg>
<div class="a" style="left:1032px;top:45px;width:2px;height:26px;background:#d5d5d5"></div>
<svg style="left:1045px;top:49px" width="16" height="19" viewBox="0 0 16 19"><path d="M0.8,17 V0.8 H14 V10" fill="none" stroke="#333" stroke-width="1.3"/><path d="M3,4 H4 M5,4 H12 M3,6.5 H4 M5,6.5 H12 M3,9 H4 M5,9 H12" stroke="#333" stroke-width="1.1"/><ellipse cx="10" cy="15" rx="5.5" ry="2.8" fill="none" stroke="#333" stroke-width="1.2"/><path d="M5,19 L15,11" stroke="#333" stroke-width="1.2"/></svg>
<svg style="left:1077px;top:48px" width="19" height="20" viewBox="0 0 19 20"><path d="M4,1 V9 M0,5 H8" stroke="#1b5ec4" stroke-width="2.2"/><path d="M3,11 H8 V19 H3Z M2,10 L3,11 M12,2 V19 H18 V4 L16,2Z" fill="none" stroke="#333" stroke-width="1.3"/><path d="M8,10 L11,7" stroke="#333" stroke-width="1"/></svg>
<div class="a" style="left:1104px;top:45px;width:2px;height:26px;background:#d5d5d5"></div>
<svg style="left:1116px;top:49px" width="17" height="18" viewBox="0 0 17 18"><ellipse cx="11" cy="9" rx="4" ry="8" fill="none" stroke="#333" stroke-width="1.8"/><path d="M11,8 L2,15" stroke="#1f5fb8" stroke-width="2.2"/><path d="M0,17 L2,12 L5,15.5Z" fill="#1f5fb8"/></svg>
<svg style="left:1149px;top:48px" width="18" height="20" viewBox="0 0 18 20"><ellipse cx="9" cy="9.5" rx="8" ry="4" fill="none" stroke="#333" stroke-width="1.8"/><path d="M15,3 Q12,0.5 5,1 M2,15 Q6,18.5 14,18" fill="none" stroke="#1f5fb8" stroke-width="1.3"/><path d="M3.5,1 L6,-1 V3Z M15.5,18 L13,16 V20Z" fill="#1f5fb8"/></svg>
<svg style="left:1183px;top:49px" width="19" height="18" viewBox="0 0 19 18"><ellipse cx="9.5" cy="5" rx="8" ry="4" fill="none" stroke="#333" stroke-width="1.8"/><path d="M1.5,10 V14 M6,11 V16 M13,11 V16 M17.5,10 V14" stroke="#1f5fb8" stroke-width="1.4"/><path d="M0,13 H3 L1.5,15.5Z M4.5,15 H7.5 L6,17.5Z M11.5,15 H14.5 L13,17.5Z M16,13 H19 L17.5,15.5Z" fill="#1f5fb8"/></svg>
<svg style="left:1216px;top:48px" width="20" height="20" viewBox="0 0 20 20"><ellipse cx="10" cy="10" rx="8" ry="4" fill="none" stroke="#333" stroke-width="1.8"/><path d="M0.5,0.5 L4,4 M19.5,0.5 L16,4 M0.5,19.5 L4,16 M19.5,19.5 L16,16" stroke="#1f5fb8" stroke-width="1.3"/><path d="M5,5 L2,4.5 L4.5,2Z M15,5 L18,4.5 L15.5,2Z M5,15 L2,15.5 L4.5,18Z M15,15 L18,15.5 L15.5,18Z" fill="#1f5fb8"/></svg>
<svg style="left:1251px;top:49px" width="18" height="19" viewBox="0 0 18 19"><path d="M2,0 V3 M6,0 V3 M12,0 V3 M16,0 V3" stroke="#1f5fb8" stroke-width="1.6"/><ellipse cx="9" cy="9" rx="8" ry="4" fill="none" stroke="#333" stroke-width="1.8"/><path d="M9,10 V16" stroke="#1f5fb8" stroke-width="1.6"/><path d="M6,15 H12 L9,19Z" fill="#1f5fb8"/></svg>
<div class="a" style="left:1288px;top:42px;width:161px;height:32px;background:#f1f1f1;border-radius:3px"></div>
<div class="t" style="left:1297.5px;top:50.7px;font-size:16px;color:#3a3a3a;font-weight:normal;font-style:normal;transform:scaleX(0.8506);transform-origin:0 0;">Search tools...</div>
<div class="a" style="left:1388px;top:49px;width:34px;height:19px;background:#fafafa;border:1px solid #cfcfcf;border-radius:2px"></div>
<div class="t" style="left:1390.5px;top:53.0px;font-size:12px;color:#444;font-weight:normal;font-style:normal;transform:scaleX(0.9328);transform-origin:0 0;">alt/⌥</div>
<div class="a" style="left:1423px;top:49px;width:16px;height:19px;background:#fafafa;border:1px solid #cfcfcf;border-radius:2px"></div>
<div class="t" style="left:1427.5px;top:53.0px;font-size:12px;color:#444;font-weight:normal;font-style:normal;transform:scaleX(1.1667);transform-origin:0 0;">c</div>
<div class="a" style="left:40px;top:76px;width:206px;height:974px;background:#fff;border-top:1px solid #d6d6d6;border-right:1px solid #d0d0d0"></div>
<svg style="left:10px;top:49px" width="21" height="19" viewBox="0 0 21 19"><circle cx="4" cy="4" r="3" fill="none" stroke="#333" stroke-width="1.6"/><path d="M4,7 V16" fill="none" stroke="#333" stroke-width="1.6"/><circle cx="4" cy="16.5" r="1.8" fill="#333"/><path d="M4,13 Q4,10.5 8.5,9.5" fill="none" stroke="#333" stroke-width="1.6"/><circle cx="9" cy="9.5" r="1.8" fill="#333"/><path d="M9,2.5 H20 M12,9.5 H20 M12,13.5 H20 M9,17.5 H20" stroke="#333" stroke-width="1.8"/></svg>
<svg style="left:12px;top:83px" width="18" height="19" viewBox="0 0 18 19"><path d="M4,0 V19" stroke="#333" stroke-width="1.6" stroke-dasharray="1.8,1.5"/><circle cx="4" cy="8" r="2.8" fill="#333"/><path d="M12,9.5 V18 M7.8,13.8 H16.2" stroke="#1b5ec4" stroke-width="2"/></svg>
<svg style="left:10px;top:120px" width="20" height="17" viewBox="0 0 20 17"><ellipse cx="10" cy="6.5" rx="9.5" ry="6" fill="#333"/><path d="M3,10 L1.5,16 L8,12Z" fill="#333"/></svg>
<svg style="left:11px;top:154px" width="19" height="19" viewBox="0 0 19 19"><path d="M13,6 V1 H1 V18 H13 V13" fill="none" stroke="#333" stroke-width="1.7"/><path d="M3.5,5 H10 M3.5,8.5 H9 M3.5,12 H7" stroke="#333" stroke-width="1.5"/><path d="M8.5,15 L16,6 L18.3,8 L10.8,16.8 L8,17.5Z" fill="#333"/></svg>
<svg style="left:10px;top:189px" width="19" height="18" viewBox="0 0 19 18"><circle cx="11" cy="10.5" r="6.8" fill="none" stroke="#333" stroke-width="1.7"/><path d="M9,1.5 H13 M11,1.5 V3.5 M11,10.5 L14,7.5" stroke="#333" stroke-width="1.7"/><path d="M0,9 H3 M0.5,12 H3.5 M1.5,15 H5" stroke="#333" stroke-width="1.2"/></svg>
<svg style="left:9px;top:223px" width="21" height="20" viewBox="0 0 21 20"><circle cx="10.5" cy="10" r="9.8" fill="#333"/><path d="M10.5,4 L15.5,7 V13 L10.5,16 L5.5,13 V7Z" fill="none" stroke="#fff" stroke-width="1.4"/><path d="M10.5,7.5 L13,9 V11.5 L10.5,13 L8,11.5 V9Z" fill="none" stroke="#fff" stroke-width="1"/><path d="M15,17 L20,20 L19,15Z" fill="#333"/></svg>
<div class="a" style="left:0px;top:251px;width:40px;height:1px;background:#dcdcdc"></div>
<svg style="left:11px;top:260px" width="17" height="18" viewBox="0 0 17 18"><rect x="0.8" y="0.8" width="15.4" height="16.4" rx="1" fill="none" stroke="#333" stroke-width="1.5"/><path d="M3,4 L4.5,5.5 L7,3 M3,8.5 L4.5,10 L7,7.5 M3,13 L4.5,14.5 L7,12" fill="none" stroke="#333" stroke-width="1.1"/><path d="M8.5,4.5 H14 M8.5,9 H14 M8.5,13.5 H14" stroke="#333" stroke-width="1.3"/></svg>
<svg style="left:11px;top:1059px" width="19" height="16" viewBox="0 0 19 16"><path d="M0,0 H17 V3 H11 Q7,4 5.5,7 H0Z" fill="#333"/><circle cx="11" cy="9" r="4.3" fill="none" stroke="#333" stroke-width="2"/><path d="M14,12 L17.5,15.5" stroke="#333" stroke-width="2.2"/></svg>
<svg style="left:50px;top:92px" width="17" height="17" viewBox="0 0 17 17"><path d="M1,1.5 H16 L10,8.5 V15.5 L7,14 V8.5Z" fill="none" stroke="#333" stroke-width="1.4" stroke-linejoin="round"/></svg>
<div class="a" style="left:79px;top:84px;width:122px;height:30px;border:1px solid #c4c4c4;border-radius:4px;background:#fff"></div>
<div class="t" style="left:86.0px;top:93.5px;font-size:14.5px;color:#8a8a8a;font-weight:normal;font-style:italic;transform:scaleX(0.8925);transform-origin:0 0;">Filter by name</div>
<svg style="left:215px;top:91px" width="15" height="15" viewBox="0 0 15 15"><path d="M0,1.5 H2 M4,1.5 H15 M0,5.5 H2 M4,5.5 H15 M0,9.5 H2 M4,9.5 H15 M0,13.5 H2 M4,13.5 H15" stroke="#333" stroke-width="2"/></svg>
<div class="t" style="left:44.0px;top:124.3px;font-size:13.5px;color:#333;font-weight:bold;font-style:normal;transform:scaleX(0.9451);transform-origin:0 0;">Instances (9)</div>
<svg style="left:216px;top:123px" width="19" height="15" viewBox="0 0 19 15"><path d="M0.6,3 V14.4 H18.4 V3.5 H8 L6.5,0.6 H0.6Z" fill="none" stroke="#8aa0b8" stroke-width="1.1"/><path d="M4.5,6.5 V13 M1.5,9.8 H7.5" stroke="#2a6ad0" stroke-width="1.5"/></svg>
<svg style="left:46px;top:149px" width="15" height="15" viewBox="0 0 15 15"><path d="M0.6,3 L3,0.6 H14.4 V12 L12,14.4 H0.6Z" fill="#fff" stroke="#555" stroke-width="1"/><rect x="3" y="3" width="9" height="9" fill="#888"/><path d="M0.6,3 H12 V14.4 M12,3 L14.4,0.6" fill="none" stroke="#555" stroke-width="1"/></svg>
<div class="t" style="left:66.0px;top:150.8px;font-size:13.5px;color:#333;font-weight:normal;font-style:normal;transform:scaleX(0.9888);transform-origin:0 0;">Assembly 2</div>
<svg style="left:69px;top:178px" width="9" height="9" viewBox="0 0 9 9"><circle cx="4.5" cy="4.5" r="3.8" fill="none" stroke="#666" stroke-width="1"/><circle cx="4.5" cy="4.5" r="1.6" fill="#666"/></svg>
<div class="t" style="left:86.0px;top:177.1px;font-size:13.5px;color:#333;font-weight:normal;font-style:normal;transform:scaleX(0.9718);transform-origin:0 0;">Origin</div>
<svg style="left:66px;top:201px" width="16" height="16" viewBox="0 0 16 16"><path d="M6,0.6 H11.5 L14.4,3 V14.4 H3 L0.6,12 V7 H6Z" fill="#fff" stroke="#4a5560" stroke-width="1.1" stroke-linejoin="round"/><path d="M6,0.6 L8.5,3 H14.4 M8.5,3 V10 H3 L0.6,7 M3,10 V14.4" fill="none" stroke="#4a5560" stroke-width="0.9"/></svg>
<div class="t" style="left:86.0px;top:203.3px;font-size:13.5px;color:#333;font-weight:normal;font-style:normal;transform:scaleX(0.8959);transform-origin:0 0;">1 in. Rou...</div>
<svg style="left:152px;top:201px" width="16" height="16" viewBox="0 0 16 16"><path d="M8,1.5 V8 L2,12.5 M8,8 L14,12.5" fill="none" stroke="#333" stroke-width="2"/><path d="M8,0 L5.8,3.5 H10.2Z M0,14.5 L1.5,10.5 L4,13.5Z M16,14.5 L14.5,10.5 L12,13.5Z" fill="#333"/></svg>
<div class="a" style="left:40px;top:223px;width:200px;height:23px;background:#b0dbf2"></div>
<svg style="left:66px;top:227px" width="16" height="16" viewBox="0 0 16 16"><path d="M6,0.6 H11.5 L14.4,3 V14.4 H3 L0.6,12 V7 H6Z" fill="#fff" stroke="#4a5560" stroke-width="1.1" stroke-linejoin="round"/><path d="M6,0.6 L8.5,3 H14.4 M8.5,3 V10 H3 L0.6,7 M3,10 V14.4" fill="none" stroke="#4a5560" stroke-width="0.9"/></svg>
<div class="t" style="left:86.0px;top:229.3px;font-size:13.5px;color:#333;font-weight:normal;font-style:normal;transform:scaleX(0.9120);transform-origin:0 0;">2.188 in....</div>
<svg style="left:152px;top:227px" width="16" height="16" viewBox="0 0 16 16"><path d="M8,1.5 V8 L2,12.5 M8,8 L14,12.5" fill="none" stroke="#333" stroke-width="2"/><path d="M8,0 L5.8,3.5 H10.2Z M0,14.5 L1.5,10.5 L4,13.5Z M16,14.5 L14.5,10.5 L12,13.5Z" fill="#333"/></svg>
<div class="a" style="left:40px;top:249px;width:200px;height:23px;background:#b0dbf2"></div>
<svg style="left:66px;top:253px" width="16" height="16" viewBox="0 0 16 16"><path d="M6,0.6 H11.5 L14.4,3 V14.4 H3 L0.6,12 V7 H6Z" fill="#fff" stroke="#4a5560" stroke-width="1.1" stroke-linejoin="round"/><path d="M6,0.6 L8.5,3 H14.4 M8.5,3 V10 H3 L0.6,7 M3,10 V14.4" fill="none" stroke="#4a5560" stroke-width="0.9"/></svg>
<div class="t" style="left:86.0px;top:255.3px;font-size:13.5px;color:#333;font-weight:normal;font-style:normal;transform:scaleX(0.9200);transform-origin:0 0;">2.438 in....</div>
<svg style="left:152px;top:253px" width="16" height="16" viewBox="0 0 16 16"><path d="M8,1.5 V8 L2,12.5 M8,8 L14,12.5" fill="none" stroke="#333" stroke-width="2"/><path d="M8,0 L5.8,3.5 H10.2Z M0,14.5 L1.5,10.5 L4,13.5Z M16,14.5 L14.5,10.5 L12,13.5Z" fill="#333"/></svg>
<div class="a" style="left:40px;top:275px;width:200px;height:23px;background:#b0dbf2"></div>
<svg style="left:66px;top:279px" width="16" height="16" viewBox="0 0 16 16"><path d="M6,0.6 H11.5 L14.4,3 V14.4 H3 L0.6,12 V7 H6Z" fill="#fff" stroke="#4a5560" stroke-width="1.1" stroke-linejoin="round"/><path d="M6,0.6 L8.5,3 H14.4 M8.5,3 V10 H3 L0.6,7 M3,10 V14.4" fill="none" stroke="#4a5560" stroke-width="0.9"/></svg>
<div class="t" style="left:86.0px;top:281.3px;font-size:13.5px;color:#333;font-weight:normal;font-style:normal;transform:scaleX(0.9536);transform-origin:0 0;">65T HT...</div>
<svg style="left:152px;top:279px" width="16" height="16" viewBox="0 0 16 16"><path d="M8,1.5 V8 L2,12.5 M8,8 L14,12.5" fill="none" stroke="#333" stroke-width="2"/><path d="M8,0 L5.8,3.5 H10.2Z M0,14.5 L1.5,10.5 L4,13.5Z M16,14.5 L14.5,10.5 L12,13.5Z" fill="#333"/></svg>
<div class="a" style="left:40px;top:301px;width:200px;height:23px;background:#b0dbf2"></div>
<svg style="left:66px;top:305px" width="16" height="16" viewBox="0 0 16 16"><path d="M6,0.6 H11.5 L14.4,3 V14.4 H3 L0.6,12 V7 H6Z" fill="#fff" stroke="#4a5560" stroke-width="1.1" stroke-linejoin="round"/><path d="M6,0.6 L8.5,3 H14.4 M8.5,3 V10 H3 L0.6,7 M3,10 V14.4" fill="none" stroke="#4a5560" stroke-width="0.9"/></svg>
<div class="t" style="left:86.0px;top:307.3px;font-size:13.5px;color:#333;font-weight:normal;font-style:normal;transform:scaleX(0.9628);transform-origin:0 0;">75T HT...</div>
<svg style="left:152px;top:305px" width="16" height="16" viewBox="0 0 16 16"><path d="M8,1.5 V8 L2,12.5 M8,8 L14,12.5" fill="none" stroke="#333" stroke-width="2"/><path d="M8,0 L5.8,3.5 H10.2Z M0,14.5 L1.5,10.5 L4,13.5Z M16,14.5 L14.5,10.5 L12,13.5Z" fill="#333"/></svg>
<div class="a" style="left:40px;top:327px;width:200px;height:23px;background:#b0dbf2"></div>
<svg style="left:66px;top:331px" width="16" height="16" viewBox="0 0 16 16"><path d="M6,0.6 H11.5 L14.4,3 V14.4 H3 L0.6,12 V7 H6Z" fill="#fff" stroke="#4a5560" stroke-width="1.1" stroke-linejoin="round"/><path d="M6,0.6 L8.5,3 H14.4 M8.5,3 V10 H3 L0.6,7 M3,10 V14.4" fill="none" stroke="#4a5560" stroke-width="0.9"/></svg>
<div class="t" style="left:86.0px;top:333.3px;font-size:13.5px;color:#333;font-weight:normal;font-style:normal;transform:scaleX(0.9036);transform-origin:0 0;">8 in. Rou...</div>
<svg style="left:152px;top:331px" width="16" height="16" viewBox="0 0 16 16"><path d="M8,1.5 V8 L2,12.5 M8,8 L14,12.5" fill="none" stroke="#333" stroke-width="2"/><path d="M8,0 L5.8,3.5 H10.2Z M0,14.5 L1.5,10.5 L4,13.5Z M16,14.5 L14.5,10.5 L12,13.5Z" fill="#333"/></svg>
<div class="a" style="left:40px;top:353px;width:200px;height:23px;background:#b0dbf2"></div>
<svg style="left:66px;top:357px" width="16" height="16" viewBox="0 0 16 16"><path d="M6,0.6 H11.5 L14.4,3 V14.4 H3 L0.6,12 V7 H6Z" fill="#fff" stroke="#4a5560" stroke-width="1.1" stroke-linejoin="round"/><path d="M6,0.6 L8.5,3 H14.4 M8.5,3 V10 H3 L0.6,7 M3,10 V14.4" fill="none" stroke="#4a5560" stroke-width="0.9"/></svg>
<div class="t" style="left:86.0px;top:359.3px;font-size:13.5px;color:#333;font-weight:normal;font-style:normal;transform:scaleX(0.9545);transform-origin:0 0;">Motor M...</div>
<svg style="left:152px;top:357px" width="16" height="16" viewBox="0 0 16 16"><path d="M8,1.5 V8 L2,12.5 M8,8 L14,12.5" fill="none" stroke="#333" stroke-width="2"/><path d="M8,0 L5.8,3.5 H10.2Z M0,14.5 L1.5,10.5 L4,13.5Z M16,14.5 L14.5,10.5 L12,13.5Z" fill="#333"/></svg>
<div class="a" style="left:40px;top:379px;width:200px;height:23px;background:#b0dbf2"></div>
<svg style="left:66px;top:383px" width="16" height="16" viewBox="0 0 16 16"><path d="M6,0.6 H11.5 L14.4,3 V14.4 H3 L0.6,12 V7 H6Z" fill="#fff" stroke="#4a5560" stroke-width="1.1" stroke-linejoin="round"/><path d="M6,0.6 L8.5,3 H14.4 M8.5,3 V10 H3 L0.6,7 M3,10 V14.4" fill="none" stroke="#4a5560" stroke-width="0.9"/></svg>
<div class="t" style="left:86.0px;top:385.3px;font-size:13.5px;color:#333;font-weight:normal;font-style:normal;transform:scaleX(0.9298);transform-origin:0 0;">Origin C...</div>
<svg style="left:152px;top:383px" width="16" height="16" viewBox="0 0 16 16"><path d="M8,1.5 V8 L2,12.5 M8,8 L14,12.5" fill="none" stroke="#333" stroke-width="2"/><path d="M8,0 L5.8,3.5 H10.2Z M0,14.5 L1.5,10.5 L4,13.5Z M16,14.5 L14.5,10.5 L12,13.5Z" fill="#333"/></svg>
<div class="a" style="left:40px;top:405px;width:200px;height:23px;background:#b0dbf2"></div>
<svg style="left:66px;top:409px" width="16" height="16" viewBox="0 0 16 16"><path d="M6,0.6 H11.5 L14.4,3 V14.4 H3 L0.6,12 V7 H6Z" fill="#fff" stroke="#4a5560" stroke-width="1.1" stroke-linejoin="round"/><path d="M6,0.6 L8.5,3 H14.4 M8.5,3 V10 H3 L0.6,7 M3,10 V14.4" fill="none" stroke="#4a5560" stroke-width="0.9"/></svg>
<div class="t" style="left:86.0px;top:411.3px;font-size:13.5px;color:#333;font-weight:normal;font-style:normal;transform:scaleX(0.9709);transform-origin:0 0;">Small Pl...</div>
<svg style="left:152px;top:409px" width="16" height="16" viewBox="0 0 16 16"><path d="M8,1.5 V8 L2,12.5 M8,8 L14,12.5" fill="none" stroke="#333" stroke-width="2"/><path d="M8,0 L5.8,3.5 H10.2Z M0,14.5 L1.5,10.5 L4,13.5Z M16,14.5 L14.5,10.5 L12,13.5Z" fill="#333"/></svg>
<svg style="left:45px;top:385px" width="9" height="13" viewBox="0 0 9 13"><path d="M1.5,1 L7,6.5 L1.5,12" fill="none" stroke="#333" stroke-width="1.6"/></svg>
<svg style="left:44px;top:439px" width="13" height="8" viewBox="0 0 13 8"><path d="M1,1 L6.5,6.5 L12,1" fill="none" stroke="#333" stroke-width="1.7"/></svg>
<div class="t" style="left:63.3px;top:437.6px;font-size:13.5px;color:#333;font-weight:normal;font-style:normal;transform:scaleX(0.9669);transform-origin:0 0;">Items (0)</div>
<svg style="left:44px;top:465px" width="13" height="8" viewBox="0 0 13 8"><path d="M1,1 L6.5,6.5 L12,1" fill="none" stroke="#333" stroke-width="1.7"/></svg>
<div class="t" style="left:63.3px;top:463.6px;font-size:13.5px;color:#333;font-weight:normal;font-style:normal;transform:scaleX(0.9466);transform-origin:0 0;">Loads (0)</div>
<svg style="left:44px;top:491px" width="13" height="8" viewBox="0 0 13 8"><path d="M1,1 L6.5,6.5 L12,1" fill="none" stroke="#333" stroke-width="1.7"/></svg>
<div class="t" style="left:63.3px;top:489.6px;font-size:13.5px;color:#333;font-weight:normal;font-style:normal;transform:scaleX(0.9506);transform-origin:0 0;">Mate Features (1)</div>
<div class="a" style="left:40px;top:509px;width:200px;height:24px;background:#b0dbf2"></div>
<div class="a" style="left:49px;top:511px;width:1px;height:22px;background:#9fb8c8"></div>
<svg style="left:85px;top:513px" width="16" height="16" viewBox="0 0 16 16"><rect x="1" y="1" width="14" height="14" fill="none" stroke="#7f93a3" stroke-width="1" stroke-dasharray="2,1.5"/><rect x="4" y="4" width="5.5" height="5.5" fill="none" stroke="#7f93a3" stroke-width="1.1"/><rect x="6.5" y="6.5" width="5.5" height="5.5" fill="none" stroke="#7f93a3" stroke-width="1.1"/></svg>
<div class="t" style="left:105.0px;top:515.3px;font-size:13.5px;color:#6f8ca2;font-weight:bold;font-style:normal;transform:scaleX(0.9176);transform-origin:0 0;">Group 1</div>
<div class="a" style="left:245px;top:538px;width:33px;height:34px;background:#fff;border:1px solid #bdbdbd;border-left:none"></div>
<svg style="left:252px;top:547px" width="17" height="17" viewBox="0 0 17 17"><path d="M1,1.5 L3.5,4 L6,1.5" fill="none" stroke="#333" stroke-width="1.4"/><path d="M3.5,6 V16" stroke="#999" stroke-width="1.6"/><path d="M9,1.5 H16 M6.5,6.5 H16 M6.5,11.5 H16 M6.5,16.5 H16" stroke="#333" stroke-width="1.3"/></svg>
<div class="a" style="left:258px;top:79px;width:219px;height:272px;background:#fff;box-shadow:0 1px 5px rgba(0,0,0,0.28);border-radius:1px"></div>
<div class="t" style="left:264.0px;top:87.3px;font-size:13.5px;color:#333;font-weight:bold;font-style:normal;transform:scaleX(0.8886);transform-origin:0 0;">Group 1</div>
<div class="a" style="left:422px;top:79px;width:28px;height:28px;background:#0a9a14"></div>
<svg style="left:426px;top:85px" width="20" height="16" viewBox="0 0 20 16"><path d="M2,8 L7.5,13 L18,2.5" fill="none" stroke="#fff" stroke-width="3"/></svg>
<svg style="left:457px;top:88px" width="13" height="13" viewBox="0 0 13 13"><path d="M1.5,1.5 L11.5,11.5 M11.5,1.5 L1.5,11.5" stroke="#c62f37" stroke-width="2.8"/></svg>
<div class="a" style="left:258px;top:107px;width:219px;height:1px;background:#e2e2e2"></div>
<div class="a" style="left:261px;top:113px;width:214px;height:212px;background:linear-gradient(#e2eef8,#dcebf7);border:1px solid #3d6aa6;border-radius:2px"></div>
<div class="t" style="left:267.0px;top:119.7px;font-size:10px;color:#555;font-weight:normal;font-style:normal;transform:scaleX(1.0161);transform-origin:0 0;">Instances</div>
<div class="t" style="left:268.0px;top:138.4px;font-size:14px;color:#505a62;font-weight:normal;font-style:normal;transform:scaleX(0.9459);transform-origin:0 0;">Small Plate &lt;1&gt;</div>
<svg style="left:455px;top:142.0px" width="9" height="8" viewBox="0 0 9 8"><path d="M0.5,0.5 L8.5,7.5 M8.5,0.5 L0.5,7.5" stroke="#555" stroke-width="1.1"/></svg>
<div class="a" style="left:262px;top:158.15px;width:212px;height:24px;background:rgba(255,255,255,0.25)"></div>
<div class="t" style="left:268.0px;top:162.5px;font-size:14px;color:#505a62;font-weight:normal;font-style:normal;transform:scaleX(0.9409);transform-origin:0 0;">Motor Mount Plate &lt;1&gt;</div>
<svg style="left:455px;top:166.15px" width="9" height="8" viewBox="0 0 9 8"><path d="M0.5,0.5 L8.5,7.5 M8.5,0.5 L0.5,7.5" stroke="#555" stroke-width="1.1"/></svg>
<div class="t" style="left:268.0px;top:186.7px;font-size:14px;color:#505a62;font-weight:normal;font-style:normal;transform:scaleX(0.9101);transform-origin:0 0;">Origin Cube &lt;1&gt;</div>
<svg style="left:455px;top:190.3px" width="9" height="8" viewBox="0 0 9 8"><path d="M0.5,0.5 L8.5,7.5 M8.5,0.5 L0.5,7.5" stroke="#555" stroke-width="1.1"/></svg>
<div class="a" style="left:262px;top:206.45px;width:212px;height:24px;background:rgba(255,255,255,0.25)"></div>
<div class="t" style="left:268.0px;top:210.8px;font-size:14px;color:#505a62;font-weight:normal;font-style:normal;transform:scaleX(0.8942);transform-origin:0 0;">2.438 in. Rounded Hex Shaft &lt;...</div>
<svg style="left:455px;top:214.45px" width="9" height="8" viewBox="0 0 9 8"><path d="M0.5,0.5 L8.5,7.5 M8.5,0.5 L0.5,7.5" stroke="#555" stroke-width="1.1"/></svg>
<div class="t" style="left:268.0px;top:235.0px;font-size:14px;color:#505a62;font-weight:normal;font-style:normal;transform:scaleX(0.8893);transform-origin:0 0;">2.188 in. Rounded Hex Shaft &lt;...</div>
<svg style="left:455px;top:238.6px" width="9" height="8" viewBox="0 0 9 8"><path d="M0.5,0.5 L8.5,7.5 M8.5,0.5 L0.5,7.5" stroke="#555" stroke-width="1.1"/></svg>
<div class="a" style="left:262px;top:254.75px;width:212px;height:24px;background:rgba(255,255,255,0.25)"></div>
<div class="t" style="left:268.0px;top:259.1px;font-size:14px;color:#505a62;font-weight:normal;font-style:normal;transform:scaleX(0.8943);transform-origin:0 0;">8 in. Rounded Hex Shaft &lt;1&gt;</div>
<svg style="left:455px;top:262.75px" width="9" height="8" viewBox="0 0 9 8"><path d="M0.5,0.5 L8.5,7.5 M8.5,0.5 L0.5,7.5" stroke="#555" stroke-width="1.1"/></svg>
<div class="t" style="left:268.0px;top:283.3px;font-size:14px;color:#505a62;font-weight:normal;font-style:normal;transform:scaleX(0.9327);transform-origin:0 0;">65T HTD Belt &lt;1&gt;</div>
<svg style="left:455px;top:286.9px" width="9" height="8" viewBox="0 0 9 8"><path d="M0.5,0.5 L8.5,7.5 M8.5,0.5 L0.5,7.5" stroke="#555" stroke-width="1.1"/></svg>
<div class="a" style="left:262px;top:303.04999999999995px;width:212px;height:24px;background:rgba(255,255,255,0.25)"></div>
<div class="t" style="left:268.0px;top:307.4px;font-size:14px;color:#505a62;font-weight:normal;font-style:normal;transform:scaleX(0.9282);transform-origin:0 0;">75T HTD Belt &lt;1&gt;</div>
<svg style="left:455px;top:311.04999999999995px" width="9" height="8" viewBox="0 0 9 8"><path d="M0.5,0.5 L8.5,7.5 M8.5,0.5 L0.5,7.5" stroke="#555" stroke-width="1.1"/></svg>
<svg style="left:460px;top:334px" width="13" height="13" viewBox="0 0 13 13"><circle cx="6.5" cy="6.5" r="6.3" fill="#a8a8a8"/><path d="M4.3,5 Q4.3,2.8 6.5,2.8 Q8.7,2.8 8.7,4.7 Q8.7,5.8 7.3,6.5 Q6.5,7 6.5,8" fill="none" stroke="#fff" stroke-width="1.5"/><circle cx="6.5" cy="10" r="0.9" fill="#fff"/></svg>
<div class="a" style="left:40px;top:1050px;width:1879px;height:29px;background:#d7d7d7;border-top:2px solid #d0d0d0"></div>
<div class="a" style="left:40px;top:1050px;width:33px;height:29px;background:#d2d2d2"></div>
<svg style="left:49px;top:1056px" width="16" height="16" viewBox="0 0 16 16"><path d="M8,0.5 V15.5 M0.5,8 H15.5" stroke="#555" stroke-width="2.6"/></svg>
<div class="a" style="left:74px;top:1051px;width:40px;height:28px;background:#e6e6e6;border-radius:4px 0 0 0"></div>
<svg style="left:82px;top:1053px" width="19" height="18" viewBox="0 0 19 18"><path d="M9.5,0.5 L19,9 H16.5 V17.5 H11.5 V12 H7.5 V17.5 H2.5 V9 H0Z" fill="#606060"/><rect x="13" y="1.5" width="3" height="5" fill="#606060"/></svg>
<svg style="left:104px;top:1050px" width="142" height="29" viewBox="0 0 142 29"><path d="M0,0 H128 L140,14.5 L128,29 H0 L11,14.5Z" fill="#fafafa" stroke="#cfcfcf" stroke-width="1"/></svg>
<div class="t" style="left:129.5px;top:1055.6px;font-size:15.5px;color:#666;font-weight:normal;font-style:normal;transform:scaleX(0.8816);transform-origin:0 0;">Exercise 6 - Dire</div>
<div class="a" style="left:225px;top:1052px;width:14px;height:25px;background:linear-gradient(90deg,rgba(250,250,250,0),#fafafa 60%)"></div>
<div class="a" style="left:247px;top:1050px;width:200px;height:27px;background:#ebebeb;border-radius:0 0 5px 5px;box-shadow:0 1px 1px rgba(0,0,0,0.15)"></div>
<svg style="left:260px;top:1055px" width="15" height="15" viewBox="0 0 15 15"><circle cx="7.5" cy="7.5" r="7.3" fill="#7aa7e0"/><rect x="6.3" y="3" width="2.4" height="9" fill="#fff"/><rect x="5" y="6" width="5" height="2.5" fill="#7aa7e0"/></svg>
<svg style="left:279px;top:1054px" width="17" height="17" viewBox="0 0 17 17"><path d="M0.6,3 L3,0.6 H16.4 V14 L14,16.4 H0.6Z" fill="#fff" stroke="#444" stroke-width="1.1"/><rect x="3" y="3" width="10.5" height="10.5" fill="#8a8a8a" stroke="#555" stroke-width="0.8"/><path d="M14,3 L16.4,0.6 M3,3 L0.6,0.6" stroke="#444" stroke-width="1"/></svg>
<div class="t" style="left:299.8px;top:1056.6px;font-size:15.5px;color:#666;font-weight:normal;font-style:normal;transform:scaleX(0.9021);transform-origin:0 0;">Exercise 6 Assembly</div>
<div class="a" style="left:449px;top:1050px;width:200px;height:29px;background:#fff"></div>
<div class="a" style="left:451px;top:1076px;width:197px;height:3px;background:#2155b3;border-radius:2px"></div>
<svg style="left:460px;top:1054px" width="17" height="17" viewBox="0 0 17 17"><path d="M0.6,3 L3,0.6 H16.4 V14 L14,16.4 H0.6Z" fill="#fff" stroke="#444" stroke-width="1.1"/><rect x="3" y="3" width="10.5" height="10.5" fill="#8a8a8a" stroke="#555" stroke-width="0.8"/><path d="M14,3 L16.4,0.6 M3,3 L0.6,0.6" stroke="#444" stroke-width="1"/></svg>
<div class="t" style="left:482.0px;top:1056.6px;font-size:15.5px;color:#333;font-weight:normal;font-style:normal;transform:scaleX(0.9048);transform-origin:0 0;">Assembly 2</div>
<div class="a" style="left:650px;top:1050px;width:201px;height:27px;background:#ebebeb;border-radius:0 0 5px 5px;box-shadow:0 1px 1px rgba(0,0,0,0.15)"></div>
<svg style="left:663px;top:1054px" width="17" height="17" viewBox="0 0 17 17"><path d="M0.6,4 L3,2 H6.5 V16.4 H0.6Z M6.5,4 L9,2" fill="#fff" stroke="#444" stroke-width="1.1"/><path d="M8.5,2.5 L11,0.6 H16.4 V16.4 H8.5Z M11,0.6 V14.5 M8.5,2.5 V16.4 M11,14.5 L8.5,16.4" fill="#fff" stroke="#444" stroke-width="1.1"/></svg>
<div class="t" style="left:684.0px;top:1056.6px;font-size:15.5px;color:#666;font-weight:normal;font-style:normal;transform:scaleX(0.8835);transform-origin:0 0;">Exercise 6 Part Studio</div>
<svg style="left:1889px;top:1029px" width="20" height="16" viewBox="0 0 20 16"><path d="M2,14 A8,8 0 0 1 18,14" fill="none" stroke="#777" stroke-width="1.5"/><path d="M5,14 A5,5 0 0 1 15,14" fill="none" stroke="#777" stroke-width="1.2"/><path d="M10,14 L13,8" stroke="#777" stroke-width="1.3"/><path d="M0,15 H20" stroke="#777" stroke-width="1.3"/></svg>
<div class="a" style="left:1888px;top:368px;width:31px;height:200px;background:#fff;border-left:1px solid #cfcfcf;border-top:1px solid #cfcfcf;border-bottom:1px solid #cfcfcf"></div>
<div class="a" style="left:1889px;top:401.2px;width:30px;height:1px;background:#d8d8d8"></div>
<div class="a" style="left:1889px;top:434.4px;width:30px;height:1px;background:#d8d8d8"></div>
<div class="a" style="left:1889px;top:467.6px;width:30px;height:1px;background:#d8d8d8"></div>
<div class="a" style="left:1889px;top:500.8px;width:30px;height:1px;background:#d8d8d8"></div>
<div class="a" style="left:1889px;top:534.0px;width:30px;height:1px;background:#d8d8d8"></div>
<div class="a" style="left:1888px;top:575px;width:31px;height:167px;background:#fff;border-left:1px solid #cfcfcf;border-top:1px solid #cfcfcf;border-bottom:1px solid #cfcfcf"></div>
<div class="a" style="left:1889px;top:608.2px;width:30px;height:1px;background:#d8d8d8"></div>
<div class="a" style="left:1889px;top:641.4px;width:30px;height:1px;background:#d8d8d8"></div>
<div class="a" style="left:1889px;top:674.6px;width:30px;height:1px;background:#d8d8d8"></div>
<div class="a" style="left:1889px;top:707.8px;width:30px;height:1px;background:#d8d8d8"></div>
<svg style="left:1895px;top:376.0px" width="18" height="18" viewBox="0 0 18 18"><rect x="1" y="1" width="16" height="16" rx="3" fill="none" stroke="#333" stroke-width="1.5"/><path d="M4.5,5 H13.5 M6,8 H13.5 M6,11 H13.5 M4.5,14 H13.5" stroke="#333" stroke-width="1.3"/></svg>
<svg style="left:1895px;top:409.2px" width="18" height="18" viewBox="0 0 18 18"><path d="M1,1 H8 V8 H1Z M1,4.5 H8 M4.5,1 V8" stroke="#2a64c4" stroke-width="1.2" fill="none"/><path d="M6,8 L11,5 L17,8 V14 L11,17.5 L6,14Z M6,8 L11,11 L17,8 M11,11 V17.5" fill="none" stroke="#333" stroke-width="1.3"/></svg>
<svg style="left:1895px;top:442.4px" width="18" height="18" viewBox="0 0 18 18"><rect x="1" y="1" width="4" height="4" fill="none" stroke="#2a64c4" stroke-width="1.2"/><path d="M5,5 L8,8" stroke="#2a64c4" stroke-width="1" stroke-dasharray="1.5,1"/><path d="M8,9 H12 V5 H17 V17 H8Z" fill="none" stroke="#333" stroke-width="1.3"/></svg>
<svg style="left:1895px;top:475.6px" width="18" height="18" viewBox="0 0 18 18"><path d="M10,1 H16 V11" fill="none" stroke="#2a64c4" stroke-width="1.3" stroke-dasharray="2,1.5"/><path d="M1,11 H16 V17 H1Z" fill="none" stroke="#333" stroke-width="1.3"/><circle cx="13" cy="14" r="1.8" fill="none" stroke="#333" stroke-width="1.1"/></svg>
<svg style="left:1895px;top:508.8px" width="18" height="18" viewBox="0 0 18 18"><path d="M9,1 L17,10 L9,17 L1,10Z" fill="#3b7fd6"/><path d="M9,1 L9,10 L17,10 M9,10 L1,10 M9,10 L9,17" stroke="#fff" stroke-width="1.4"/><path d="M9,10 L17,10 L9,17Z" fill="#9aa6b4"/></svg>
<svg style="left:1895px;top:542.0px" width="18" height="18" viewBox="0 0 18 18"><path d="M1,1 H10 V7 H1Z M4,1 V7 M7,1 V7 M1,4 H10" fill="none" stroke="#333" stroke-width="1.1"/><path d="M3,8 Q1,12 3,17 M17,8 Q19,12 17,17" fill="none" stroke="#333" stroke-width="1.5"/><path d="M6,9 Q10,8 9,13 Q8,17 12,16 M6,16 L13,9" fill="none" stroke="#333" stroke-width="1.8"/></svg>
<svg style="left:1894px;top:582.0px" width="20" height="20" viewBox="0 0 20 20"><rect x="0" y="0" width="20" height="20" fill="#ddd"/><rect x="1.5" y="1.5" width="17" height="17" fill="#1c4aa0"/><text x="10" y="15" font-family="Liberation Serif" font-weight="bold" font-size="11" fill="#fff" text-anchor="middle" letter-spacing="-0.5">MK</text></svg>
<svg style="left:1894px;top:615.2px" width="20" height="20" viewBox="0 0 20 20"><rect x="0" y="0" width="20" height="20" rx="3" fill="#ddd"/><path d="M10,9 Q6,2 2,4 Q3,9 7,10 Q3,13 6,17 Q9,15 10,11 Q11,15 14,17 Q17,13 13,10 Q17,9 18,4 Q14,2 10,9Z" fill="#111"/></svg>
<svg style="left:1894px;top:648.4px" width="20" height="20" viewBox="0 0 20 20"><rect x="0" y="0" width="20" height="20" rx="3" fill="#ddd"/><rect x="2" y="5" width="16" height="11" rx="2" fill="#333"/><circle cx="7" cy="10" r="2.5" fill="#fff"/><circle cx="13" cy="10" r="2.5" fill="#fff"/><circle cx="7" cy="10" r="1" fill="#333"/><circle cx="13" cy="10" r="1" fill="#333"/><path d="M7,4 V2 M13,4 V2" stroke="#333" stroke-width="1.2"/></svg>
<svg style="left:1894px;top:681.6px" width="20" height="20" viewBox="0 0 20 20"><rect x="0" y="0" width="20" height="20" rx="2" fill="#ddd"/><rect x="1.5" y="1.5" width="17" height="17" fill="#4caf50"/><path d="M3.5,5 H9 V16 H3.5Z M11,5 H16.5 V16 H11Z" fill="#fff"/></svg>
<svg style="left:1894px;top:714.8px" width="20" height="20" viewBox="0 0 20 20"><rect x="0" y="0" width="20" height="20" rx="2" fill="#ddd"/><rect x="1.5" y="1.5" width="17" height="17" fill="#1c4aa0"/><path d="M3.5,5 H9 V16 H3.5Z M11,5 H16.5 V16 H11Z" fill="#fff"/></svg>
<svg style="left:0;top:0" width="1919" height="1079" viewBox="0 0 1919 1079">
<path d="M1823,91 L1837,91 L1830,101Z" transform="rotate(180 1830 96)" fill="#9b9b9b"/>
<path d="M1823,231 L1837,231 L1830,241Z" fill="#9b9b9b"/>
<path d="M1765,158 L1765,173 L1755,165.5Z" fill="#9b9b9b"/>
<path d="M1895,158 L1895,173 L1905,165.5Z" fill="#9b9b9b"/>
<path d="M1808,101 Q1790,107 1781,120" fill="none" stroke="#9b9b9b" stroke-width="5.5"/>
<path d="M1775,125 L1776,111 L1789,118Z" fill="#9b9b9b"/>
<path d="M1851,101 Q1869,107 1878,120" fill="none" stroke="#9b9b9b" stroke-width="5.5"/>
<path d="M1884,125 L1883,111 L1870,118Z" fill="#9b9b9b"/>
<g>
<path d="M1830,124 L1868,138 L1866,190 L1834,206 L1793,192 L1791,140Z" fill="#e4e6e8"/>
<path d="M1805,133 L1840,125 L1857,135 L1822,150Z" fill="#fafbfc"/>
<path d="M1797,148 L1822,156 L1824,196 L1799,186Z" fill="#fafbfc"/>
<path d="M1829,158 L1862,142 L1860,183 L1830,198Z" fill="#fafbfc"/>
<circle cx="1848" cy="161" r="5" fill="#f4f5f6"/>
</g>
<path d="M1788,197 V147" stroke="#3336b8" stroke-width="1.3"/>
<path d="M1788,197 L1840,212" stroke="#d42a2a" stroke-width="1.3"/>
<path d="M1788,197 L1815,173" stroke="#4cae4c" stroke-width="0.9"/>
<text x="1783" y="145" font-family="Liberation Sans" font-size="11" fill="#5a5ad0">Z</text>
<text x="1843" y="219" font-family="Liberation Sans" font-size="11" fill="#d42a2a">X</text>
<text x="1816" y="172" font-family="Liberation Sans" font-size="8" fill="#9ccf9c">Y</text>
<text x="1802" y="181" font-family="Liberation Sans" font-size="11" fill="#222" transform="rotate(12 1814 177)">Front</text>
<text x="1822" y="143" font-family="Liberation Sans" font-size="8.5" font-style="italic" fill="#222" transform="rotate(20 1830 140)">Top</text>
<text x="1848" y="180" font-family="Liberation Sans" font-size="9" fill="#222" transform="rotate(-62 1856 172)">Right</text>
<path d="M1867,227 L1875,223 L1883,227 L1883,236 L1875,240 L1867,236Z" fill="#fff" stroke="#333" stroke-width="1.1"/>
<path d="M1867,227 L1875,231 L1875,240 L1867,236Z" fill="#999"/>
<path d="M1875,231 L1883,227" stroke="#333" stroke-width="1"/>
<path d="M1891,230 H1899 L1895,235Z" fill="#222"/>
</svg></body></html>
